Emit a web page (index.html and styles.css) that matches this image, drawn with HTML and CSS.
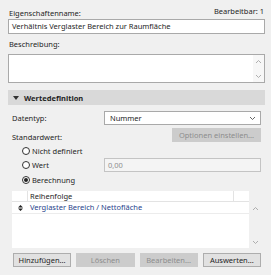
FILE: index.html
```html
<!DOCTYPE html>
<html lang="de">
<head>
    <meta charset="UTF-8">
    <title>Eigenschaft bearbeiten</title>
    <link rel="stylesheet" href="styles.css">
</head>
<body>
    <div class="panel">
        <div class="head-row">
            <span class="lbl">Eigenschaftenname:</span>
            <span class="edit-count">Bearbeitbar: 1</span>
        </div>
        <div class="field name-field">Verhältnis Verglaster Bereich zur Raumfläche</div>
        <div class="lbl desc-lbl">Beschreibung:</div>
        <div class="field desc-field">
            <div class="vscroll">
                <svg width="7" height="5" viewBox="0 0 7 5"><polyline points="1,4 3.5,1.5 6,4" /></svg>
                <svg width="7" height="5" viewBox="0 0 7 5"><polyline points="1,1 3.5,3.5 6,1" /></svg>
            </div>
        </div>

        <div class="section-head">
            <svg width="6" height="4" viewBox="0 0 6 4"><polygon points="0,0 6,0 3,4" /></svg>
            <span>Wertedefinition</span>
        </div>

        <div class="section-body">
            <div class="form-row">
                <span class="lbl">Datentyp:</span>
                <div class="field select">
                    <span>Nummer</span>
                    <svg width="7" height="5" viewBox="0 0 7 5"><polyline points="1,1 3.5,3.5 6,1" /></svg>
                </div>
            </div>
            <div class="form-row std-row">
                <span class="lbl">Standardwert:</span>
                <div class="opt-wrap">
                    <button class="btn btn-opt" disabled>Optionen einstellen...</button>
                </div>
            </div>

            <div class="radio-row first">
                <span class="radio"></span><span>Nicht definiert</span>
            </div>
            <div class="radio-row wert-row">
                <div class="radio-lbl"><span class="radio"></span><span>Wert</span></div>
                <div class="field value-field">0,00</div>
            </div>
            <div class="radio-row last">
                <span class="radio on"></span><span>Berechnung</span>
            </div>

            <div class="table-wrap">
                <div class="table">
                    <div class="t-head">
                        <div class="c-icon"></div>
                        <div class="c-main">Reihenfolge</div>
                        <div class="c-end"></div>
                    </div>
                    <div class="t-row">
                        <div class="c-icon">
                            <svg width="5" height="6" viewBox="0 0 5 6"><polygon points="0,2.5 5,2.5 2.5,0" /><polygon points="0,3.5 5,3.5 2.5,6" /></svg>
                        </div>
                        <div class="c-main link">Verglaster Bereich / Nettofläche</div>
                        <div class="c-end"></div>
                    </div>
                </div>
                <div class="vscroll table-scroll">
                    <svg width="7" height="5" viewBox="0 0 7 5"><polyline points="1,4 3.5,1.5 6,4" /></svg>
                    <svg width="7" height="5" viewBox="0 0 7 5"><polyline points="1,1 3.5,3.5 6,1" /></svg>
                </div>
            </div>

            <div class="btn-row">
                <button class="btn">Hinzufügen...</button>
                <button class="btn" disabled>Löschen</button>
                <button class="btn" disabled>Bearbeiten...</button>
                <button class="btn">Auswerten...</button>
            </div>
        </div>
    </div>
</body>
</html>
```

FILE: styles.css
```css
* { margin: 0; padding: 0; box-sizing: border-box; }
body {
    font-family: 'Noto Sans', 'Open Sans', sans-serif;
    font-size: 7.5px;
    color: #1e1e1e;
    background-color: #f0f0f0;
    padding: 7px 6px 0 8px;
}
.lbl {
    color: #1e1e1e;
}
.head-row {
    display: flex;
    justify-content: space-between;
    align-items: flex-start;
    height: 12px;
    padding-left: 1px;
}
.head-row .lbl {
    line-height: 12px;
}
.edit-count {
    line-height: 8px;
    padding-right: 1px;
}
.field {
    background-color: #fff;
    border: 1px solid #a9a9a9;
}
.name-field {
    height: 15px;
    line-height: 13px;
    padding-left: 3px;
}
.desc-lbl {
    height: 20px;
    line-height: 20px;
    padding-left: 1px;
}
.desc-field {
    height: 29px;
    display: flex;
    justify-content: flex-end;
}
.vscroll {
    width: 11px;
    display: flex;
    flex-direction: column;
    justify-content: space-between;
    align-items: center;
    padding: 4px 0 3px;
    background-color: #f7f7f7;
}
.vscroll svg polyline {
    fill: none;
    stroke: #a6a6a6;
    stroke-width: 0.9;
}

/* Wertedefinition */
.section-head {
    margin-top: 7px;
    height: 15px;
    background-color: #d9d9d9;
    display: flex;
    align-items: center;
    gap: 5px;
    padding-left: 5px;
    font-weight: 700;
}
.section-head polygon {
    fill: #333;
}
.section-body {
    padding: 0 4px;
}
.form-row {
    display: grid;
    grid-template-columns: 92px 1fr;
    align-items: center;
    height: 14px;
    margin-top: 6px;
}
.std-row {
    margin-top: 3px;
}
.std-row .lbl {
    padding-top: 4px;
}
.select {
    height: 14px;
    display: flex;
    align-items: center;
    justify-content: space-between;
    padding: 0 4px 0 5px;
}
.select polyline {
    fill: none;
    stroke: #555;
    stroke-width: 0.9;
}
.opt-wrap {
    display: flex;
    justify-content: flex-end;
}
.btn {
    font-family: inherit;
    font-size: 7.5px;
    color: #1e1e1e;
    background-color: #e1e1e1;
    border: 1px solid #adadad;
    height: 14px;
    line-height: 12px;
}
.btn:disabled {
    color: #8c8c8c;
    background-color: #cccccc;
    border-color: #cccccc;
}
.btn-opt {
    width: 89px;
}
.radio-row {
    display: flex;
    align-items: center;
    height: 14px;
    padding-left: 10px;
}
.radio-row.first {
    margin-top: 2px;
}
.radio-row.last {
    margin-top: 1px;
}
.radio-lbl {
    display: flex;
    align-items: center;
}
.wert-row {
    display: grid;
    grid-template-columns: 82px 1fr;
}
.radio {
    width: 8px;
    height: 8px;
    border: 1px solid #333;
    border-radius: 50%;
    background-color: #fff;
    margin-right: 2px;
    display: flex;
    align-items: center;
    justify-content: center;
}
.radio.on::after {
    content: "";
    width: 4px;
    height: 4px;
    border-radius: 50%;
    background-color: #222;
}
.value-field {
    height: 14px;
    line-height: 12px;
    padding-left: 3px;
    color: #8f8f8f;
    background-color: #f4f4f4;
    border-color: #c4c4c4;
}

/* Reihenfolge table */
.table-wrap {
    display: flex;
    margin-top: 4px;
    height: 57px;
}
.table {
    width: 238px;
    background-color: #fff;
}
.t-head, .t-row {
    display: grid;
    grid-template-columns: 15px 1fr 15px;
}
.t-head {
    height: 11px;
    line-height: 11px;
    border-bottom: 1px solid #e3e3e3;
}
.t-head .c-main {
    border-left: 1px solid #e3e3e3;
    border-right: 1px solid #e3e3e3;
    padding-left: 2px;
}
.t-row {
    height: 12px;
    line-height: 11px;
    border-bottom: 1px solid #ececec;
}
.t-row .c-main {
    padding-left: 3px;
}
.c-icon {
    display: flex;
    align-items: center;
    justify-content: center;
    padding-left: 1px;
}
.c-icon polygon {
    fill: #222;
}
.link {
    color: #1f3f8c;
}
.table-scroll {
    width: 12px;
    background-color: transparent;
    padding: 15px 0 3px;
}
.btn-row {
    display: grid;
    grid-template-columns: repeat(4, 1fr);
    gap: 5px;
    margin-top: 5px;
    padding-left: 1px;
}
```
